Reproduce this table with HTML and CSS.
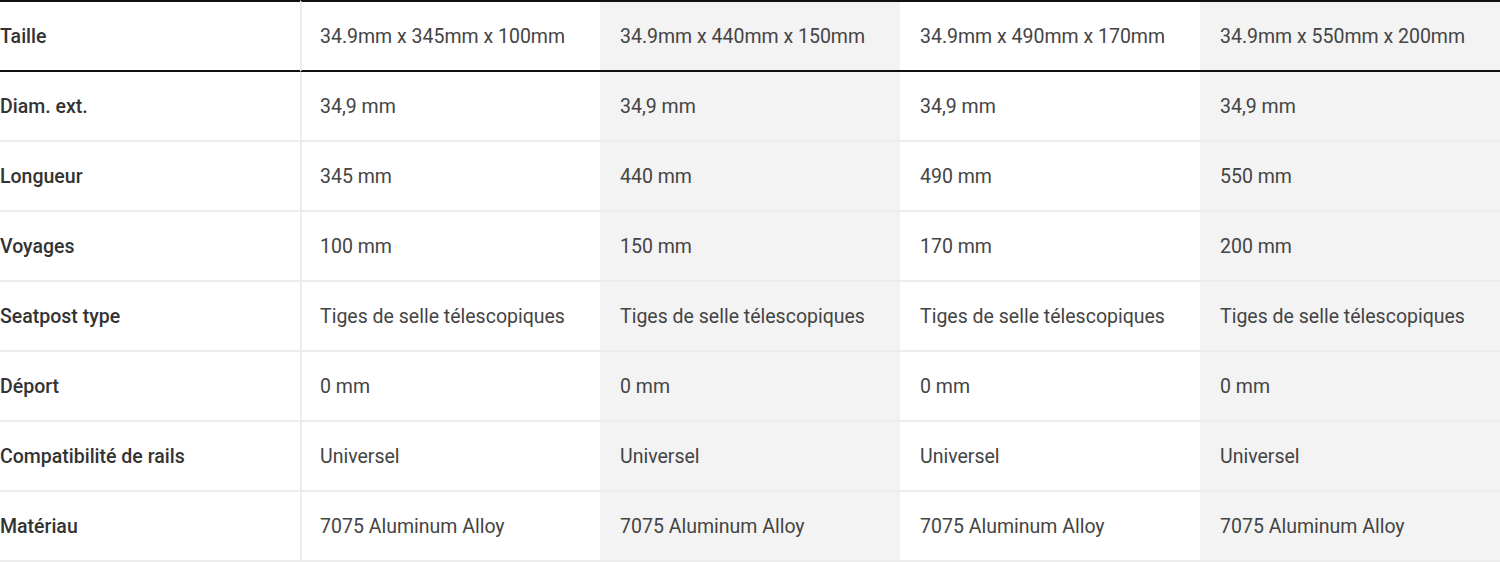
FILE: index.html
```html
<!DOCTYPE html>
<html lang="fr">
<head>
<meta charset="utf-8">
<title>Caractéristiques</title>
<link rel="stylesheet" href="styles.css">
</head>
<body>
<table class="specs">
  <colgroup>
    <col class="c-label"><col><col class="c-alt"><col><col class="c-alt">
  </colgroup>
  <thead>
    <tr>
      <th class="label">Taille</th>
      <th class="val first">34.9mm x 345mm x 100mm</th>
      <th class="val alt">34.9mm x 440mm x 150mm</th>
      <th class="val">34.9mm x 490mm x 170mm</th>
      <th class="val alt">34.9mm x 550mm x 200mm</th>
    </tr>
  </thead>
  <tbody>
    <tr>
      <td class="label">Diam. ext.</td>
      <td class="val first">34,9 mm</td>
      <td class="val alt">34,9 mm</td>
      <td class="val">34,9 mm</td>
      <td class="val alt">34,9 mm</td>
    </tr>
    <tr>
      <td class="label">Longueur</td>
      <td class="val first">345 mm</td>
      <td class="val alt">440 mm</td>
      <td class="val">490 mm</td>
      <td class="val alt">550 mm</td>
    </tr>
    <tr>
      <td class="label">Voyages</td>
      <td class="val first">100 mm</td>
      <td class="val alt">150 mm</td>
      <td class="val">170 mm</td>
      <td class="val alt">200 mm</td>
    </tr>
    <tr>
      <td class="label">Seatpost type</td>
      <td class="val first">Tiges de selle télescopiques</td>
      <td class="val alt">Tiges de selle télescopiques</td>
      <td class="val">Tiges de selle télescopiques</td>
      <td class="val alt">Tiges de selle télescopiques</td>
    </tr>
    <tr>
      <td class="label">Déport</td>
      <td class="val first">0 mm</td>
      <td class="val alt">0 mm</td>
      <td class="val">0 mm</td>
      <td class="val alt">0 mm</td>
    </tr>
    <tr>
      <td class="label">Compatibilité de rails</td>
      <td class="val first">Universel</td>
      <td class="val alt">Universel</td>
      <td class="val">Universel</td>
      <td class="val alt">Universel</td>
    </tr>
    <tr>
      <td class="label">Matériau</td>
      <td class="val first">7075 Aluminum Alloy</td>
      <td class="val alt">7075 Aluminum Alloy</td>
      <td class="val">7075 Aluminum Alloy</td>
      <td class="val alt">7075 Aluminum Alloy</td>
    </tr>
  </tbody>
</table>
</body>
</html>
```

FILE: styles.css
```css
html, body {
  margin: 0;
  padding: 0;
  background: #ffffff;
}

body {
  font-family: Roboto, "Liberation Sans", Arial, sans-serif;
  font-size: 19.5px;
  color: #444444;
}

.specs {
  width: 1500px;
  table-layout: fixed;
  border-collapse: separate;
  border-spacing: 0;
}

.specs col {
  width: 300px;
}

.specs th,
.specs td {
  box-sizing: border-box;
  height: 70px;
  padding: 0 0 0 20px;
  text-align: left;
  vertical-align: middle;
  font-weight: 400;
  white-space: nowrap;
  border-bottom: 2px solid #ececec;
}

.specs thead th {
  height: 72px;
  border-top: 2px solid #111111;
  border-bottom: 2px solid #111111;
}

.specs .label {
  padding-left: 0;
  font-weight: 500;
  color: #333333;
}

.specs .first {
  border-left: 2px solid #ececec;
  padding-left: 18px;
}

.specs .val {
  color: #444444;
}

.specs .alt {
  background: #f3f3f3;
}
```
